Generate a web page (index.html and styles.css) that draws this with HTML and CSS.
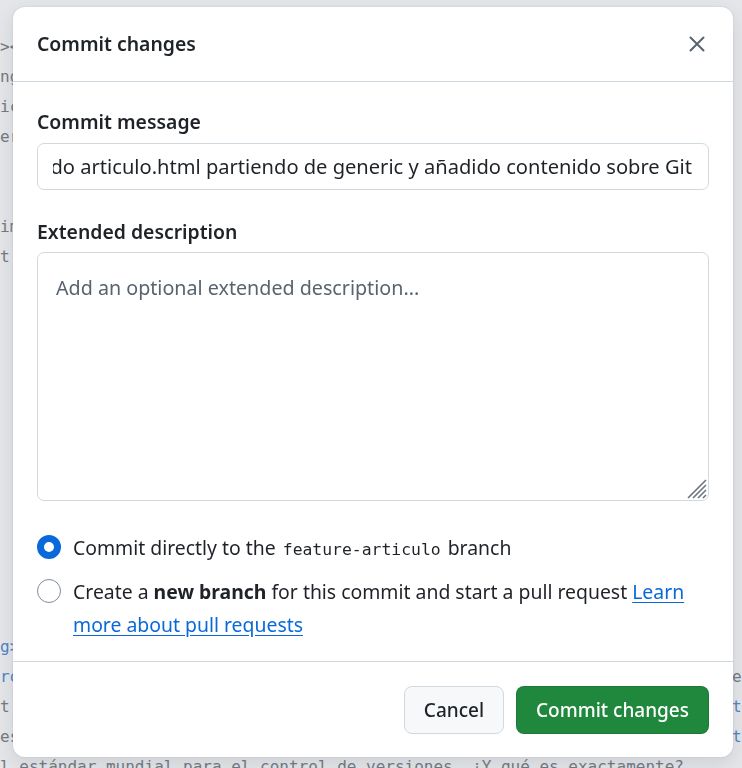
FILE: index.html
```html
<!DOCTYPE html>
<html lang="es">
<head>
<meta charset="utf-8">
<title>Commit changes</title>
<link rel="stylesheet" href="styles.css">
</head>
<body>
<div class="code" aria-hidden="true">
<div class="ln">&gt;&lt;title&gt;Artículo sobre Git&lt;/title&gt;</div>
<div class="ln">ng="es"&gt;</div>
<div class="ln">icon" href="favicon.ico"&gt;</div>
<div class="ln">er&gt;</div>
<div class="ln"> </div>
<div class="ln"> </div>
<div class="ln">img src="img/git.png" alt="Logo de Git"&gt;</div>
<div class="ln">t'&gt;</div>
<div class="ln"> </div>
<div class="ln"> </div>
<div class="ln"> </div>
<div class="ln"> </div>
<div class="ln"> </div>
<div class="ln"> </div>
<div class="ln"> </div>
<div class="ln"> </div>
<div class="ln"> </div>
<div class="ln"> </div>
<div class="ln"> </div>
<div class="ln"> </div>
<div class="ln blue">g&gt;</div>
<div class="ln"><span class="blue">rol</span> de versiones más usado del mundo, creado por Linus Torvalds en 2005, superando a otros.</div>
<div class="ln">t, es decir, un sistema que registra los cambios realizados en los ficheros <span class="blue">tras cada cambio.</span></div>
<div class="ln">es posible volver a versiones anteriores, comparar cambios y trabajar conjun<span class="blue">tamente.</span></div>
<div class="ln">l estándar mundial para el control de versiones. ¿Y qué es exactamente?</div>
</div>

<div class="dialog" role="dialog" aria-labelledby="dlg-title">
  <header class="dlg-head">
    <h1 class="dlg-title" id="dlg-title">Commit changes</h1>
    <button class="close" aria-label="Close">
      <svg width="16" height="16" viewBox="0 0 16 16" aria-hidden="true"><path d="M1.5 1.5 L14.5 14.5 M14.5 1.5 L1.5 14.5" stroke="#59636e" stroke-width="2" stroke-linecap="round" fill="none"/></svg>
    </button>
  </header>
  <div class="dlg-body">
    <label class="label">Commit message</label>
    <div class="input"><div class="input-clip"><span>Creado articulo.html partiendo de generic y añadido contenido sobre Git</span></div></div>
    <label class="label label-ext">Extended description</label>
    <div class="textarea">
      <span class="placeholder">Add an optional extended description...</span>
      <svg class="grip" width="22" height="22" viewBox="0 0 22 22" aria-hidden="true"><path d="M3 21 L21 3 M8 21 L21 8 M13 21 L21 13 M18 21 L21 18" stroke="#6e7781" stroke-width="1.6" fill="none"/></svg>
    </div>
    <div class="options">
      <div class="opt"><span class="radio checked"></span><span class="opt-text">Commit directly to the <code>feature-articulo</code> branch</span></div>
      <div class="opt"><span class="radio"></span><span class="opt-text">Create a <strong>new branch</strong> for this commit and start a pull request <a href="#">Learn more about pull requests</a></span></div>
    </div>
  </div>
  <footer class="dlg-foot">
    <button class="btn">Cancel</button>
    <button class="btn btn-primary">Commit changes</button>
  </footer>
</div>
</body>
</html>
```
FILE: styles.css
```css
html, body {
  margin: 0;
  height: 768px;
  overflow: hidden;
}
body {
  background: #e4e6e9;
}
.code {
  font-family: "DejaVu Sans Mono", monospace;
  font-size: 16px;
  line-height: 30px;
  color: #737a82;
  padding-top: 32px;
  height: 736px;
  overflow: hidden;
}
.ln {
  white-space: pre;
  height: 30px;
}
.blue { color: #5283c4; }

.dialog {
  position: fixed;
  left: 13px;
  top: 7px;
  width: 720px;
  height: 750px;
  background: #fff;
  border-radius: 12px;
  box-shadow: 0 0 0 1px rgba(31, 35, 40, 0.04), 0 6px 18px rgba(66, 74, 83, 0.14);
  display: flex;
  flex-direction: column;
  font-family: "Noto Sans", sans-serif;
  font-size: 19.4px;
  color: #1f2328;
}
.dlg-head {
  flex: none;
  height: 75px;
  box-sizing: border-box;
  border-bottom: 1px solid #d1d9e0;
  display: flex;
  align-items: center;
  justify-content: space-between;
  padding: 0 20px 0 24px;
}
.dlg-title {
  margin: 0;
  font-size: 19.4px;
  font-weight: 600;
  line-height: 30px;
}
.close {
  width: 32px;
  height: 32px;
  border: 0;
  background: none;
  padding: 0;
  display: flex;
  align-items: center;
  justify-content: center;
}
.dlg-body {
  flex: 1;
  min-height: 0;
  padding: 25px 24px 20px;
}
.label {
  display: block;
  font-weight: 600;
  line-height: 30px;
}
.input {
  margin-top: 6px;
  height: 47px;
  box-sizing: border-box;
  border: 1px solid #d1d9e0;
  border-radius: 7px;
  padding: 0 16px 0 15px;
  display: flex;
  align-items: center;
}
.input-clip {
  flex: 1;
  min-width: 0;
  overflow: hidden;
  display: flex;
  justify-content: flex-end;
  white-space: nowrap;
  font-size: 20.1px;
}
.input-clip span { flex: none; }
.label-ext { margin-top: 27px; }
.textarea {
  position: relative;
  margin-top: 5px;
  height: 249px;
  box-sizing: border-box;
  border: 1px solid #d1d9e0;
  border-radius: 7px;
  padding: 20px 18px;
  line-height: 30px;
}
.placeholder {
  color: #59636e;
  font-size: 19.7px;
}
.grip {
  position: absolute;
  right: 1px;
  bottom: 1px;
}
.options {
  margin-top: 30px;
  display: flex;
  flex-direction: column;
  gap: 11px;
}
.opt {
  display: flex;
  align-items: flex-start;
  gap: 12px;
  line-height: 33px;
}
.radio {
  flex: none;
  width: 24px;
  height: 24px;
  margin-top: 4px;
  box-sizing: border-box;
  border: 1px solid #818b98;
  border-radius: 50%;
  background: #fff;
}
.radio.checked {
  border: 7px solid #0969da;
}
code {
  font-family: "DejaVu Sans Mono", monospace;
  font-size: 16.4px;
  line-height: 1;
  padding: 0 2px;
}
strong { font-weight: 700; }
a {
  color: #0969da;
  text-decoration: underline;
  text-underline-offset: 3px;
}
.dlg-foot {
  flex: none;
  border-top: 1px solid #d1d9e0;
  padding: 24px 24px 23px;
  display: flex;
  justify-content: flex-end;
  gap: 12px;
}
.btn {
  height: 48px;
  padding: 0 19px;
  border-radius: 8px;
  border: 1px solid #d1d9e0;
  background: #f6f8fa;
  color: #1f2328;
  font-family: "Noto Sans", sans-serif;
  font-size: 19px;
  font-weight: 500;
}
.btn-primary {
  background: #1f883d;
  border-color: rgba(31, 35, 40, 0.15);
  color: #fff;
}
```
